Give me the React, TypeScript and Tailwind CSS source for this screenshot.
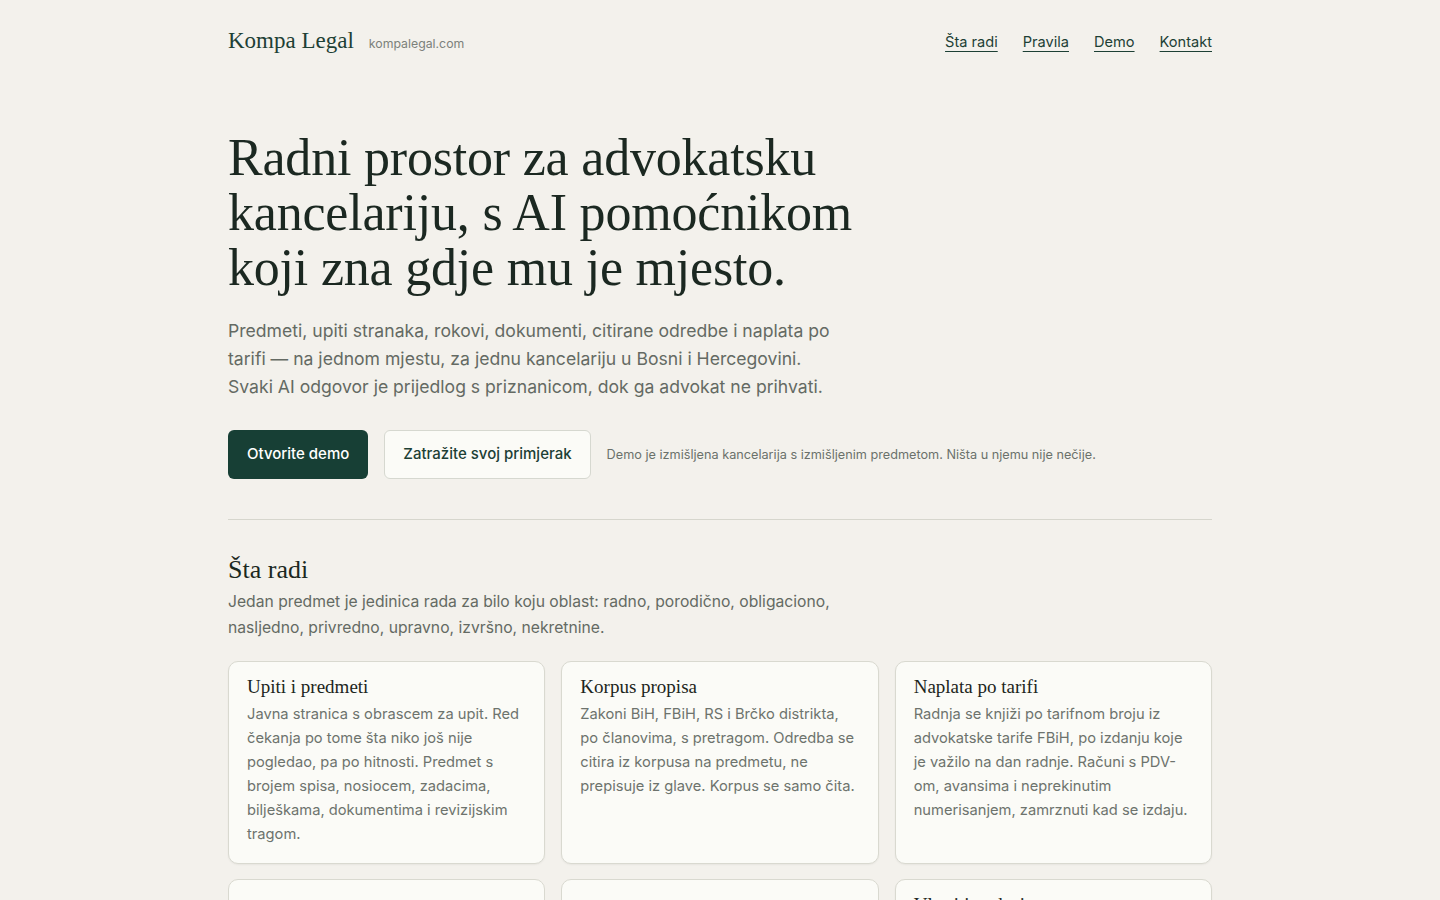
import React from "react";

const serif = "font-['Liberation_Serif',Georgia,serif]";
const sans = "font-['Inter','Noto_Sans',sans-serif]";

function Card({ title, children }: { title: string; children: React.ReactNode }) {
  return (
    <div className="rounded-[10px] border border-[#d9d9d0] bg-[#fbfbf7] px-[18px] pt-[13px] pb-[17px] shadow-[0_1px_2px_rgba(0,0,0,0.05)]">
      <h3 className={`${serif} text-[19px] leading-[24px] text-[#1c2520]`}>{title}</h3>
      <p className="mt-[3px] text-[14.7px] leading-[24px] text-[#6d736d]">{children}</p>
    </div>
  );
}

export default function App() {
  return (
    <div className={`${sans} min-h-screen bg-[#f3f1ec] text-[#1c2520]`}>
      <div className="mx-auto w-[984px]">
        <header className="flex h-[82px] items-center justify-between">
          <div className="flex items-baseline gap-[15px]">
            <span className={`${serif} text-[23px] text-[#1d4035]`}>Kompa Legal</span>
            <span className="text-[12.3px] text-[#7c817b]">kompalegal.com</span>
          </div>
          <nav className="flex items-center gap-[25px] pt-[4px] text-[14.6px] text-[#1d4035]">
            <a className="underline underline-offset-[4px] decoration-[1px]">Šta radi</a>
            <a className="underline underline-offset-[4px] decoration-[1px]">Pravila</a>
            <a className="underline underline-offset-[4px] decoration-[1px]">Demo</a>
            <a className="underline underline-offset-[4px] decoration-[1px]">Kontakt</a>
          </nav>
        </header>

        <section className="pt-[48px]">
          <h1 className={`${serif} text-[52px] leading-[55px] tracking-[-0.2px] text-[#1b2821]`}>
            Radni prostor za advokatsku
            <br />
            kancelariju, s AI pomoćnikom
            <br />
            koji zna gdje mu je mjesto.
          </h1>
          <p className="mt-[22px] w-[640px] text-[17.6px] leading-[28px] text-[#646a63]">
            Predmeti, upiti stranaka, rokovi, dokumenti, citirane odredbe i naplata po
            <br />
            tarifi — na jednom mjestu, za jednu kancelariju u Bosni i Hercegovini.
            <br />
            Svaki AI odgovor je prijedlog s priznanicom, dok ga advokat ne prihvati.
          </p>
          <div className="mt-[29px] flex items-center gap-4">
            <button className="h-[49px] rounded-[6px] bg-[#173f35] px-[19px] text-[15px] font-medium text-white">
              Otvorite demo
            </button>
            <button className="h-[49px] rounded-[6px] border border-[#d6d8d0] bg-[#fbfbf7] px-[18px] text-[15px] font-medium text-[#1d4035]">
              Zatražite svoj primjerak
            </button>
            <span className="text-[12.7px] text-[#6b716b]">
              Demo je izmišljena kancelarija s izmišljenim predmetom. Ništa u njemu nije nečije.
            </span>
          </div>
        </section>

        <div className="mt-[40px] h-px bg-[#d6d6cd]" />

        <section className="pt-[34px]">
          <h2 className={`${serif} text-[26px] leading-[32px] text-[#1b2821]`}>Šta radi</h2>
          <p className="mt-[3px] w-[640px] text-[15.7px] leading-[26px] text-[#646a63]">
            Jedan predmet je jedinica rada za bilo koju oblast: radno, porodično, obligaciono,
            <br />
            nasljedno, privredno, upravno, izvršno, nekretnine.
          </p>
          <div className="mt-[20px] grid grid-cols-3 gap-x-4 gap-y-[15px]">
            <Card title="Upiti i predmeti">
              Javna stranica s obrascem za upit. Red čekanja po tome šta niko još nije
              pogledao, pa po hitnosti. Predmet s brojem spisa, nosiocem, zadacima,
              bilješkama, dokumentima i revizijskim tragom.
            </Card>
            <Card title="Korpus propisa">
              Zakoni BiH, FBiH, RS i Brčko distrikta, po članovima, s pretragom. Odredba se
              citira iz korpusa na predmetu, ne prepisuje iz glave. Korpus se samo čita.
            </Card>
            <Card title="Naplata po tarifi">
              Radnja se knjiži po tarifnom broju iz advokatske tarife FBiH, po izdanju koje
              je važilo na dan radnje. Računi s PDV-om, avansima i neprekinutim
              numerisanjem, zamrznuti kad se izdaju.
            </Card>
            <div className="rounded-[10px] border border-[#d9d9d0] bg-[#fbfbf7] px-[18px] pt-[19px] pb-[18px]">
              <span className="inline-block rounded-full bg-[#e6e6e0] px-3 py-[2px] text-[12px] text-[#5b615b]">
                Rokovi
              </span>
              <p className="mt-2 text-[14.7px] leading-[24px] text-[#6d736d]">
                Rokovi se računaju iz datuma dostave.
              </p>
            </div>
            <div className="rounded-[10px] border border-[#d9d9d0] bg-[#fbfbf7] px-[22px] pt-[19px] pb-[18px]">
              <span className="inline-block rounded-full bg-[#f1e4d0] px-4 py-[2px] text-[12px] text-[#7a5b33]">
                AI prijedlog
              </span>
              <p className="mt-2 text-[14.7px] leading-[24px] text-[#6d736d]">
                Svaki prijedlog ima priznanicu.
              </p>
            </div>
            <Card title="Vlastiti podaci">
              Podaci kancelarije ostaju kod kancelarije.
            </Card>
          </div>
        </section>
        <div className="h-[60px]" />
      </div>
    </div>
  );
}
